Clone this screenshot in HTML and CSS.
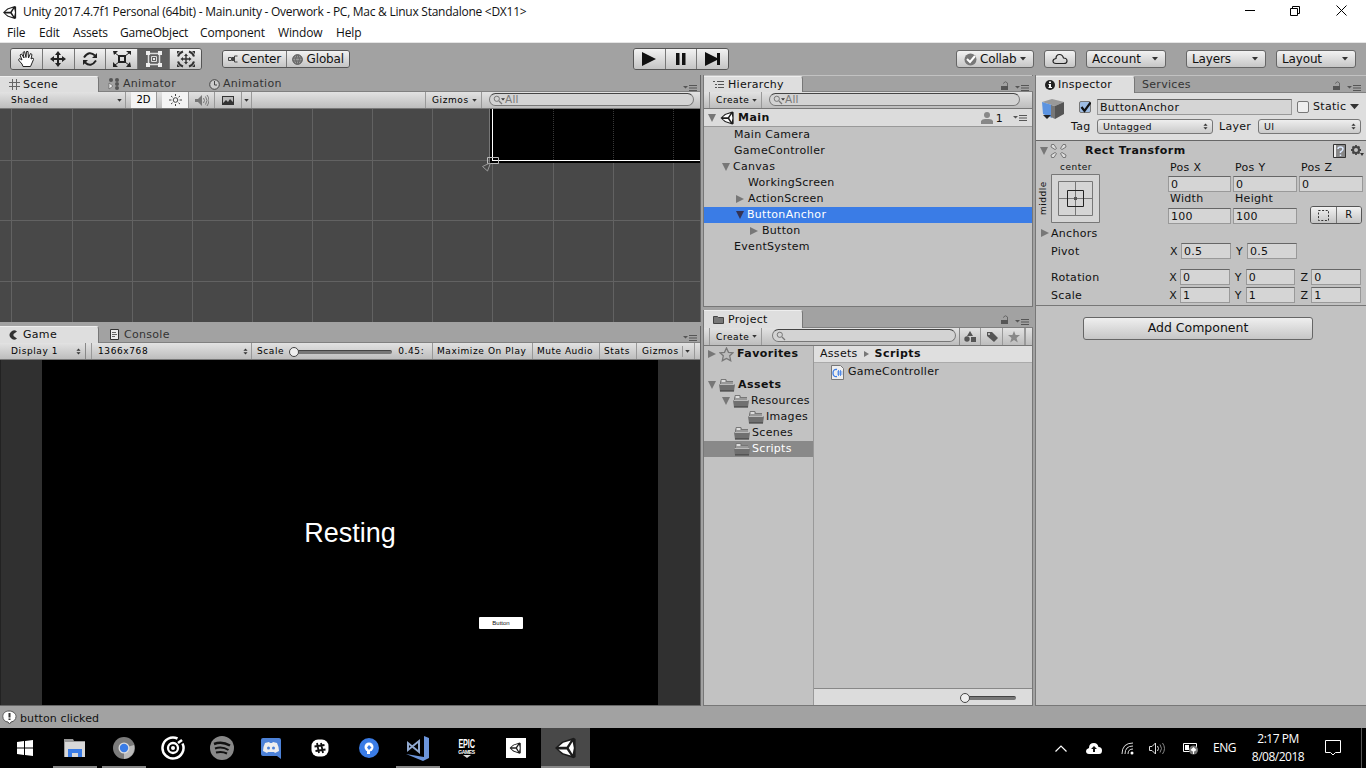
FILE: index.html
```html
<!DOCTYPE html>
<html lang="en">
<head>
<meta charset="utf-8">
<title>Unity - Main.unity</title>
<link rel="stylesheet" href="styles.css">
</head>
<body>
<svg class="defs" width="0" height="0">
  <symbol id="unity" viewBox="0 0 16 16"><path fill="#1c1c1c" d="M0 8 5 3.500 13.500.5 15 1.500 15 14.500 13.500 15.500 5 12.500Z"/><path fill="#fff" d="M2.500 7 6 4.200 11.500 2.500 8.500 7ZM2.500 9H8.500L11.500 13.500 6 11.800ZM10 8 12.800 3.500 13.700 8 12.800 12.500Z"/></symbol>
  <symbol id="lock" viewBox="0 0 10 10"><path fill="#555" d="M1 5h7v4H1z"/><path fill="none" stroke="#666" d="M3.500 2.500V2Q5.500-.5 7.500 2V5"/></symbol>
  <symbol id="menu" viewBox="0 0 14 8"><path fill="#555" d="M0 2h5L2.500 4.500zM6 1h8v1H6zM6 3.500h8v1H6zM6 6h8v1H6z"/></symbol>
  <symbol id="mag" viewBox="0 0 12 10"><circle cx="3.800" cy="3.800" r="2.600" fill="none" stroke="#777"/><path stroke="#777" stroke-width="1.300" d="M6 6l3 3"/></symbol>
  <symbol id="folder" viewBox="0 0 16 13"><path fill="#777" d="M1 3 2 0h5l1 2h6v10H1z"/><path fill="#ddd" d="M2.500 1h4v2h-4z"/><path fill="#999" d="M2 3h12v2H2z"/><path fill="#707070" d="M0 5h16l-1 7.500H1z"/><path fill="#bbb" d="M.5 5h15v1H.5z"/><path fill="#555" d="M1 11h14v1.500H1z"/></symbol>
  <symbol id="dots" viewBox="0 0 6 8"><path fill="#333" d="M.5 3 3 .5 5.500 3zM.5 5h5L3 7.500z"/></symbol>
  <symbol id="down" viewBox="0 0 6 4"><path fill="#333" d="M0 0h6L3 3.500z"/></symbol>
</svg>
<div class="app">
  <header class="titlebar">
    <svg class="logo" width="14" height="15"><use href="#unity"/></svg>
    <span class="title">Unity 2017.4.7f1 Personal (64bit) - Main.unity - Overwork - PC, Mac &amp; Linux Standalone &lt;DX11&gt;</span>
    <svg class="winctl" width="110" height="14" viewBox="0 0 110 14" fill="none" stroke="#000"><path d="M0 6.500h10M45.500 4.500h7v7h-7zM47.500 4V2.500h7v7H53M91.500 1.500l10 10M101.500 1.500l-10 10"/></svg>
  </header>
  <nav class="menubar"><span class="m1">File</span><span class="m2">Edit</span><span class="m3">Assets</span><span class="m4">GameObject</span><span class="m5">Component</span><span class="m6">Window</span><span>Help</span></nav>

  <div class="toolbar">
    <div class="group tools">
      <span class="cell"><svg width="18" height="18" viewBox="0 0 18 18" fill="#fff" stroke="#222" stroke-linejoin="round"><path d="M6 16.500 5 14 1.500 10 2.500 8.500 5 10 3 5 4.500 4 7 8 6 2.500 7.500 1.500 9 7.500 9.500 1.500 11 1.500 11.500 8 13.500 3.500 15 4.500 14 9 16 8 16.500 9.500 13.500 16.500Z"/></svg></span>
      <span class="cell"><svg width="18" height="18" viewBox="0 0 18 18" fill="#222"><path d="M9 1l3 4h-2v3h3V6l4 3-4 3v-2h-3v3h2l-3 4-3-4h2v-3H5v2L1 9l4-3v2h3V5H6z"/></svg></span>
      <span class="cell"><svg width="18" height="18" viewBox="0 0 18 18"><path fill="none" stroke="#222" stroke-width="2" d="M3 7.500Q8 0 14 5.500M15 10.500Q10 18 4 12.500"/><path fill="#222" d="M16 3v5h-5zM2 15v-5h5z"/></svg></span>
      <span class="cell"><svg width="18" height="18" viewBox="0 0 18 18"><path fill="none" stroke="#222" stroke-width="2" d="M6 6h6v6H6z"/><path stroke="#222" d="M2 3l4 3M16 3l-4 3M2 15l4-3M16 15l-4-3"/><path fill="#222" d="M0 1h5L1 5zM13 1h5v4zM0 17v-5l5 5zM18 17h-5l4-5z"/></svg></span>
      <span class="cell on"><svg width="18" height="18" viewBox="0 0 18 18" fill="none" stroke="#ddd"><path stroke-width="1.500" d="M3.500 3.500h11v11h-11z"/><path d="M6.500 6.500h5v5h-5z"/><path fill="#eee" stroke="none" d="M1 1h4v4H1zM13 1h4v4h-4zM1 13h4v4H1zM13 13h4v4h-4zM8 8h2v2H8z"/></svg></span>
      <span class="cell"><svg width="20" height="18" viewBox="0 0 20 18"><path fill="none" stroke="#333" stroke-width="2" d="M2 6.500Q3 3 7 1.500M13 1.500Q17 3 18 6.500M18 11.500Q17 15 13 16.500M7 16.500Q3 15 2 11.500"/><path fill="#333" d="M1 1h3L1 4zM19 1h-3l3 3zM1 17h3l-3-3zM19 17h-3l3-3zM10 3.500 12 6h-1.300v2.300H13V7l2.500 2L13 11V9.700h-2.300V12H12l-2 2.500L8 12h1.300V9.700H7V11L4.500 9 7 7v1.300h2.300V6H8z"/></svg></span>
    </div>
    <div class="group pivots">
      <span class="cell"><svg width="10" height="8" viewBox="0 0 10 8"><path fill="none" stroke="#444" d="M.5 2.500h3v3h-3zM9.500 1H6.500v6h3"/><path fill="#444" d="M4 2h2v4H4z"/></svg>Center</span>
      <span class="cell"><svg width="11" height="11" viewBox="0 0 11 11" fill="none" stroke="#444"><circle cx="5.500" cy="5.500" r="4.800" fill="#999"/><path stroke="#666" d="M1 4h9M1 7h9M5 1Q2 5 5 10M6 1Q9 5 6 10"/></svg>Global</span>
    </div>
    <div class="group play">
      <span class="cell"><svg width="16" height="14"><path fill="#111" d="M1 0 15 7 1 14z"/></svg></span>
      <span class="cell"><svg width="10" height="14"><path fill="#111" d="M0 1h3.500v12H0zM6 1h3.500v12H6z"/></svg></span>
      <span class="cell"><svg width="17" height="14"><path fill="#111" d="M1 0l12 6V1h3v12h-3V8L1 14z"/></svg></span>
    </div>
    <span class="btn collab"><svg width="13" height="13" viewBox="0 0 13 13"><circle cx="6.500" cy="6.500" r="6" fill="#777"/><path fill="none" stroke="#fff" stroke-width="2" d="M3 6l3 3 5-6"/></svg>Collab<svg width="6" height="4"><use href="#down"/></svg></span>
    <span class="btn cloud"><svg width="16" height="12" viewBox="0 0 16 12"><path fill="none" stroke="#222" stroke-width="1.200" d="M4 10.500Q1 10.500 1 8 1 6 4 5.500 4 1.500 7.500 1.500 10.500 1.500 11.500 5 15 5 15 8 15 10.500 12 10.500Z"/></svg></span>
    <span class="btn account">Account<svg width="6" height="4"><use href="#down"/></svg></span>
    <span class="btn layers">Layers<svg width="6" height="4"><use href="#down"/></svg></span>
    <span class="btn layout">Layout<svg width="6" height="4"><use href="#down"/></svg></span>
  </div>

  <main class="dock">
    <div class="col left">
      <section class="panel scene">
        <div class="tabs">
          <span class="tab active"><svg width="11" height="11"><path stroke="#666" d="M3.500 0v11M7.500 0v11M0 3.500h11M0 7.500h11"/></svg>Scene</span>
          <span class="tab animator"><svg width="12" height="12" viewBox="0 0 12 12" fill="#555"><circle cx="3" cy="2" r="2"/><circle cx="9" cy="2" r="2"/><circle cx="9" cy="6" r="2"/><circle cx="9" cy="10" r="2"/><path d="M2 3l7 5"/><path fill="#eee" stroke="#555" stroke-width=".6" d="M1 5v6l4-3z"/></svg>Animator</span>
          <span class="tab animation"><svg width="11" height="11" viewBox="0 0 11 11" fill="none" stroke="#444"><circle cx="5.500" cy="5.500" r="4.800" fill="#ccc"/><path d="M5.500 2v4H8"/></svg>Animation</span>
          <svg class="pmenu" width="14" height="8"><use href="#menu"/></svg>
        </div>
        <div class="strip">
          <span class="s shaded">Shaded<svg width="5" height="3"><use href="#down"/></svg></span>
          <span class="s lit twod">2D</span>
          <span class="s lit sun"><svg width="13" height="12" viewBox="0 0 13 12" fill="none" stroke="#444"><circle cx="6.500" cy="6" r="2.300"/><path d="M6.500 0v2M6.500 10v2M0 6h2.500M10.500 6H13M2 2l1.500 1.200M11 2 9.500 3.200M2 10l1.500-1.200M11 10 9.500 8.800"/></svg></span>
          <span class="s snd"><svg width="14" height="11" viewBox="0 0 14 11"><path fill="#777" d="M0 4h3l4-4v11L3 7H0z"/><path fill="none" stroke="#777" d="M8.500 3q2 2.500 0 5M10.500 1.500q3 4 0 8M12 0q4 5 0 11"/></svg></span>
          <span class="s pic"><svg width="12" height="9"><path fill="#333" d="M0 0h12v9H0z"/><path fill="#bbb" d="M1 1h10v5L8 3 6 6 4 4 1 7z"/></svg></span>
          <span class="s picd"><svg width="5" height="3"><use href="#down"/></svg></span>
          <span class="fill"></span>
          <span class="s giz">Gizmos<svg width="5" height="3"><use href="#down"/></svg></span>
          <span class="search sc"><svg width="12" height="10"><use href="#mag"/></svg><svg class="sd" width="4" height="3"><use href="#down"/></svg>All</span>
        </div>
        <svg class="sceneview" width="700" height="213" viewBox="0 109 700 213">
          <path fill="#484848" d="M0 109h700v213H0z"/>
          <path stroke="#626262" fill="none" d="M11.500 109v213M72.500 109v213M132.500 109v213M192.500 109v213M252.500 109v213M312.500 109v213M372.500 109v213M432.500 109v213M492.500 109v213M553.500 109v213M613.500 109v213M673.500 109v213M0 160.500h700M0 220.500h700M0 281.500h700"/>
          <path d="M490 109h210v54H490z"/><path stroke="#777" d="M489.500 109v53"/>
          <path stroke="#383838" stroke-dasharray="1 1" d="M553.500 109v51M613.500 109v51M673.500 109v51"/>
          <path stroke="#fff" d="M492.500 109v52M492 160.500h208"/>
          <path fill="none" stroke="#bbb" d="M487.500 157.500h11v6h-11z"/><path fill="none" stroke="#999" d="M490 163l-7.500 3.500 5 4.500 3-8"/>
        </svg>
      </section>
      <section class="panel game">
        <div class="tabs">
          <span class="tab active"><svg width="11" height="10" viewBox="0 0 11 10"><path fill="#333" d="M8 1.500A4.500 4.500 0 1 0 8 8.500L4.500 6V4z"/></svg>Game</span>
          <span class="tab console"><svg width="10" height="11" viewBox="0 0 10 11"><path fill="#eee" stroke="#333" d="M.5.5h8v10h-8z"/><path stroke="#666" d="M2 3.500h4M2 5.500h5M2 7.500h3"/></svg>Console</span>
          <svg class="pmenu" width="14" height="8"><use href="#menu"/></svg>
        </div>
        <div class="strip">
          <span class="s disp">Display 1<svg width="5" height="7"><use href="#dots"/></svg></span>
          <span class="s res">1366x768<svg width="5" height="7"><use href="#dots"/></svg></span>
          <span class="s scale">Scale<i class="slider"><b></b></i><span>0.45:</span></span>
          <span class="s max">Maximize On Play</span>
          <span class="s mute">Mute Audio</span>
          <span class="s stats">Stats</span>
          <span class="s ggiz">Gizmos<i></i><svg width="5" height="3"><use href="#down"/></svg></span>
        </div>
        <div class="gameview"><div class="screen"><p class="resting">Resting</p><span class="uibutton">Button</span></div></div>
      </section>
    </div>

    <div class="col mid">
      <section class="panel hierarchy">
        <div class="tabs">
          <span class="tab active"><svg width="12" height="9"><path stroke="#555" d="M0 1.500h2M4 1.500h7M2 4.500h2M5 4.500h6M2 7.500h2M5 7.500h6"/></svg>Hierarchy</span>
          <svg class="lock" width="10" height="10"><use href="#lock"/></svg><svg class="pmenu" width="14" height="8"><use href="#menu"/></svg>
        </div>
        <div class="strip">
          <span class="s create">Create<svg width="5" height="3"><use href="#down"/></svg></span>
          <span class="search hs"><svg width="12" height="10"><use href="#mag"/></svg><svg class="sd" width="4" height="3"><use href="#down"/></svg>All</span>
        </div>
        <div class="sceneroot"><i class="open"></i><svg width="15" height="14"><use href="#unity"/></svg><b>Main</b><svg class="person" width="12" height="12"><circle cx="6" cy="3" r="3" fill="#888"/><path fill="#888" d="M0 12V9q1-2 4-2h4q3 0 4 2v3z"/></svg><span class="one">1</span><svg width="14" height="8"><use href="#menu"/></svg></div>
        <ul class="tree">
          <li class="d1">Main Camera</li>
          <li class="d1">GameController</li>
          <li class="d1"><i class="open"></i>Canvas</li>
          <li class="d2">WorkingScreen</li>
          <li class="d2"><i class="shut"></i>ActionScreen</li>
          <li class="d2 sel"><i class="open"></i>ButtonAnchor</li>
          <li class="d3"><i class="shut"></i>Button</li>
          <li class="d1">EventSystem</li>
        </ul>
      </section>
      <section class="panel project">
        <div class="tabs">
          <span class="tab active"><svg width="12" height="10"><path fill="#777" stroke="#444" d="M.5 1.500h4l1 1h5v6H.5z"/></svg>Project</span>
          <svg class="lock" width="10" height="10"><use href="#lock"/></svg><svg class="pmenu" width="14" height="8"><use href="#menu"/></svg>
        </div>
        <div class="strip">
          <span class="s create">Create<svg width="5" height="3"><use href="#down"/></svg></span>
          <span class="search ps"><svg width="12" height="10"><use href="#mag"/></svg></span>
          <span class="s ic"><svg width="12" height="11" fill="#555"><path d="M6 0l3 5H3z"/><circle cx="3" cy="8" r="2.700"/><path d="M7 6h5v5H7z"/></svg></span>
          <span class="s ic"><svg width="12" height="12"><path fill="#555" d="M1 1h5l6 6-4 4-7-6z"/><circle cx="3" cy="3" r="1" fill="#ddd"/></svg></span>
          <span class="s ic"><svg width="12" height="12" viewBox="0 0 12 12"><path fill="#888" d="M6 0l1.600 4H12L8.500 7l1.300 4.500L6 9l-3.800 2.500L3.500 7 0 4h4.400z"/></svg></span>
          <span class="s end"></span>
        </div>
        <div class="split">
          <ul class="folders">
            <li class="f0"><i class="shut"></i><svg width="15" height="15" viewBox="0 0 15 15"><path fill="#bbb" stroke="#777" stroke-width="1.300" d="M7.500 1l2 4.300 4.500.5-3.300 3 1 4.900-4.200-2.200-4.200 2.200 1-4.900L1 5.800l4.500-.5z"/></svg><b>Favorites</b></li>
            <li class="f0 gap"><i class="open"></i><svg width="16" height="13"><use href="#folder"/></svg><b>Assets</b></li>
            <li class="f1"><i class="open"></i><svg width="16" height="13"><use href="#folder"/></svg>Resources</li>
            <li class="f2"><svg width="16" height="13"><use href="#folder"/></svg>Images</li>
            <li class="f1"><svg width="16" height="13"><use href="#folder"/></svg>Scenes</li>
            <li class="f1 picked"><svg width="16" height="13"><use href="#folder"/></svg>Scripts</li>
          </ul>
          <div class="files">
            <div class="crumbs">Assets<i class="shut"></i><b>Scripts</b></div>
            <div class="file"><svg width="13" height="15" viewBox="0 0 13 15"><path fill="#eee" stroke="#777" d="M.5.5h9l3 3v11H.5z"/><path fill="none" stroke="#3a7ce6" stroke-width="1.300" d="M6 4.500Q2 4 2 8t4 3.500"/><path stroke="#3a7ce6" stroke-width=".8" d="M7.500 5v6M9.500 5v6M6 7h5.500M6 9h5.500"/></svg>GameController</div>
            <div class="zoombar"><i class="slider"><b></b></i></div>
          </div>
        </div>
      </section>
    </div>

    <section class="panel inspector col">
      <div class="tabs">
        <span class="tab active"><svg width="10" height="10"><circle cx="5" cy="5" r="5" fill="#222"/><path fill="#fff" d="M4 1.500h2v1.500H4zM3.500 4H6v3h1v1H3.500V7H4V5h-.5z"/></svg>Inspector</span>
        <span class="tab services">Services</span>
        <svg class="lock" width="10" height="10"><use href="#lock"/></svg><svg class="pmenu" width="14" height="8"><use href="#menu"/></svg>
      </div>
      <div class="head">
        <svg width="22" height="22" viewBox="0 0 22 22"><path fill="#999" d="M0 3 10 0l12 3-9 4z"/><path fill="#5b93e0" d="M0 3l10 3v13L1 15z"/><path fill="#555" d="M13 7l9-4v12l-9 5z"/><path fill="#777" d="M9 6l4 1v13l-4-2z"/><path fill="#222" d="M1 16h8l-4 4z"/></svg>
        <div class="headrows">
          <div class="hr1"><span class="check on"><svg width="11" height="11"><path fill="none" stroke="#111" stroke-width="2.200" d="M1.500 5 4.500 9 10.500.5"/></svg></span><span class="field name">ButtonAnchor</span><span class="check"></span><span class="static">Static</span><svg width="9" height="6" viewBox="0 0 6 4"><use href="#down"/></svg></div>
          <div class="hr2"><span class="tag">Tag</span><span class="pop p1">Untagged<svg width="5" height="7"><use href="#dots"/></svg></span><span class="lay">Layer</span><span class="pop p2">UI<svg width="5" height="7"><use href="#dots"/></svg></span></div>
        </div>
      </div>
      <div class="comp">
        <div class="comphead"><i class="open"></i><svg width="17" height="16" viewBox="0 0 17 16" fill="#ddd" stroke="#777"><path d="M1.500 1.500H4L6.500 5.500 5 6.500 1 4ZM15.500 1.500H13L10.500 5.500 12 6.500 16 4ZM1.500 14.500H4L6.500 10.500 5 9.500 1 12ZM15.500 14.500H13L10.500 10.500 12 9.500 16 12Z"/></svg><b>Rect Transform</b>
          <svg class="help" width="13" height="14"><path fill="#888" stroke="#333" d="M.5.5h12v13H.5z"/><path stroke="#eee" stroke-width="2" d="M2 1v12"/><path fill="none" stroke="#dce9ff" stroke-width="1.500" d="M5 5q0-2 2.500-2t2.500 2q0 1.500-2.500 3v1M7.500 10.500v1.500"/></svg>
          <svg class="gear" width="13" height="12"><circle cx="5" cy="5" r="3" fill="none" stroke="#444" stroke-width="2"/><path stroke="#444" stroke-width="1.800" d="M5 0v2M5 8v2M0 5h2M8 5h2M1.500 1.500l1.500 1.500M7 7l1.500 1.500M8.500 1.500 7 3M3 7 1.500 8.500"/><path fill="#333" d="M9 8h4l-2 3z"/></svg></div>
        <div class="rect">
          <div class="anchorbox"><span class="ctr">center</span><span class="midl">middle</span><svg width="49" height="49" fill="none"><path fill="#d5d5d5" stroke="#777" d="M.5.5h48v48H.5z"/><path stroke="#777" d="M7.500 7.500h34v34h-34zM24.500 8v33M8 24.500h33"/><path stroke="#222" d="M16.500 16.500h16v16h-16z"/><path fill="#555" d="M23 23h3v3h-3z"/></svg></div>
          <div class="grid3">
            <span class="lbl">Pos X</span><span class="lbl">Pos Y</span><span class="lbl">Pos Z</span>
            <span class="field">0</span><span class="field">0</span><span class="field">0</span>
            <span class="lbl">Width</span><span class="lbl">Height</span><span></span>
            <span class="field">100</span><span class="field">100</span>
            <div class="group rb"><span class="cell"><svg width="11" height="11"><path fill="none" stroke="#333" stroke-dasharray="2 1.600" d="M.5.5h10v10H.5z"/></svg></span><span class="cell r">R</span></div>
          </div>
        </div>
        <div class="row anch"><i class="shut"></i>Anchors</div>
        <div class="row"><span class="rl">Pivot</span><span class="ax">X</span><span class="field">0.5</span><span class="ax">Y</span><span class="field">0.5</span></div>
        <div class="row rot"><span class="rl">Rotation</span><span class="ax">X</span><span class="field">0</span><span class="ax">Y</span><span class="field">0</span><span class="ax">Z</span><span class="field">0</span></div>
        <div class="row"><span class="rl">Scale</span><span class="ax">X</span><span class="field">1</span><span class="ax">Y</span><span class="field">1</span><span class="ax">Z</span><span class="field">1</span></div>
      </div>
      <div class="addbtn">Add Component</div>
    </section>
  </main>

  <div class="status"><svg width="15" height="15" viewBox="0 0 15 15"><path fill="#fff" stroke="#555" d="M7 1C3 1 .8 3.500.8 6.500S3 12 6 12l1.500 2L9 12c3-.5 5-2.500 5-5.500S11 1 7 1z"/><path fill="#333" d="M6.500 3h2v4.500h-2zM6.500 8.500h2v1.500h-2z"/></svg><span>button clicked</span></div>

  <footer class="taskbar">
    <span class="app-i"><svg width="16" height="16" fill="#fff"><path d="M0 2l7-1v6.500H0zM8 1l8-1v7.500H8zM0 8.500h7V15l-7-1zM8 8.500h8V16l-8-1z"/></svg></span>
    <span class="app-i run"><svg width="22" height="19"><path fill="#999" d="M0 0h9l1 2h11v16H0z"/><path fill="#d8d8d8" d="M1 3h20v15H1z"/><path fill="#3a7ce6" d="M4 10h14v8h-4v-4H8v4H4z"/></svg></span>
    <span class="app-i run"><svg width="22" height="22"><circle cx="11" cy="11" r="11" fill="#7b7b7b"/><path fill="#bbb" d="M11 11 21 8q2 12-10 14z"/><circle cx="11" cy="11" r="5.500" fill="#ddd"/><circle cx="11" cy="11" r="4.200" fill="#3a7ce6"/></svg></span>
    <span class="app-i"><svg width="24" height="24" fill="none" stroke="#fff"><path stroke-width="2.500" d="M16.500 2.500A10.500 10.500 0 1 0 21.500 7.500"/><circle cx="12" cy="12" r="5" stroke-width="2.300"/><circle cx="12" cy="12" r="2" fill="#fff" stroke="none"/><path stroke-width="2.500" d="M17 7l4-3"/></svg></span>
    <span class="app-i"><svg width="24" height="24" fill="none" stroke="#111"><circle cx="12" cy="12" r="12" fill="#888" stroke="none"/><path stroke-width="2.500" d="M4 8q8-3 16 1.500"/><path stroke-width="2" d="M5 12.500q7-2.500 13.500 1.500M6 16.500q6-1.500 11 1"/></svg></span>
    <span class="app-i"><svg width="20" height="21"><path fill="#4d82d8" d="M2 0h16q2 0 2 2v19l-4-3H2q-2 0-2-2V2q0-2 2-2z"/><path fill="#eee" d="M4 5l4-1 1 1h2l1-1 4 1q2 4 2 8l-4 2-1-1H7l-1 1-4-2q0-4 2-8z"/><circle cx="7.500" cy="10" r="1.500" fill="#4d82d8"/><circle cx="12.500" cy="10" r="1.500" fill="#4d82d8"/></svg></span>
    <span class="app-i"><svg width="18" height="18"><rect width="17" height="17" x=".5" y=".5" rx="6.500" fill="#fff"/><path stroke="#111" stroke-width="1.800" d="M6 4l2 10M10 4l2 10M3.500 7.500l10-1.500M4.500 12l10-1.500"/></svg></span>
    <span class="app-i"><svg width="20" height="20"><circle cx="10" cy="10" r="10" fill="#3a7ce6"/><circle cx="10" cy="9" r="4.500" fill="#fff"/><path fill="#fff" d="M8 10h3v6H8z"/><path fill="#3a7ce6" d="M10 7l2.500 2.500L10 12 8 9.500z"/></svg></span>
    <span class="app-i run"><svg width="24" height="25"><path fill="#6b95dc" d="M18 0l5 2v20l-6 3L0 18l18 3z"/><path fill="none" stroke="#91a9cf" stroke-width="2" d="M13 5v11L2 7v7z"/></svg></span>
    <span class="app-i epic"><b>EPIC</b><small>GAMES</small><svg width="8" height="3"><path fill="#ddd" d="M0 0h8L4 3z"/></svg></span>
    <span class="app-i"><svg width="20" height="20"><path fill="#fff" d="M0 0h20v20H0z"/><use href="#unity" x="3.500" y="4" width="12" height="12"/></svg></span>
    <span class="app-i now run"><svg width="22" height="22"><use href="#unity"/></svg></span>
    <span class="fill"></span>
    <div class="tray">
      <svg width="12" height="7"><path fill="none" stroke="#fff" stroke-width="1.200" d="M.5 6.500 6 1l5.500 5.500"/></svg>
      <svg class="t2" width="16" height="11"><path fill="#fff" d="M3 11Q0 11 0 8q0-2 3-3 0-5 5-5 3.500 0 4.500 4 3.500 0 3.500 3.500T13 11z"/><path fill="#111" d="M8 3l3 3H9v3H7V6H5z"/></svg>
      <svg class="t3" width="13" height="13" fill="none" stroke="#ddd"><path d="M1 12Q1 1 12 1M4 12Q4 4 12 4M7 12Q7 7 12 7"/><circle cx="11" cy="11" r="1.500" fill="#fff" stroke="none"/></svg>
      <svg class="t4" width="16" height="13" fill="none" stroke="#ddd"><path d="M.5 4.500H3L6.500 1v11L3 8.500H.5zM8.500 4q2 2.500 0 5"/><path stroke="#888" d="M11 2.500q3 4 0 8M13.500 1q4 5.500 0 11"/></svg>
      <svg class="t5" width="16" height="13"><path fill="none" stroke="#fff" d="M.5 1.500h13v8H.5z"/><path fill="#fff" d="M2 3h4v5H2z"/><circle cx="10.500" cy="8" r="4.500" fill="#777"/><path fill="#fff" d="M10.500 5l3 3-3 2-3-2zM10 9h1v3h-1z"/></svg>
      <span class="lang">ENG</span>
      <span class="clock"><span>2:17 PM</span><span>8/08/2018</span></span>
      <svg class="note" width="16" height="16"><path fill="none" stroke="#fff" d="M.5.5h15v12h-5L8 15l-2.500-2.500h-5z"/></svg>
      <i class="peek"></i>
    </div>
  </footer>
</div>
</body>
</html>
```
FILE: styles.css
```css
* { box-sizing: border-box; }
body { margin: 0; overflow: hidden; background: #a2a2a2; font: 11px/16px "DejaVu Sans", sans-serif; letter-spacing: .3px; color: #111; }
svg { display: block; flex: none; }
.defs { position: absolute; }
ul { list-style: none; margin: 0; padding: 0; }
b { letter-spacing: .45px; }
.app { width: 1366px; height: 768px; display: flex; flex-direction: column; white-space: nowrap; }
.fill { flex: 1; }
.titlebar { height: 24px; background: #fff; display: flex; align-items: center; padding-left: 3px; font: 12px/16px "Open Sans", sans-serif; letter-spacing: -.26px; }
.title { margin-left: 6px; }
.winctl { margin: -2px 11px 0 auto; }
.menubar { height: 19px; background: #fff; border-bottom: 1px solid #e5e5e5; display: flex; padding-left: 7px; font: 12px/18px "Open Sans", sans-serif; letter-spacing: -.15px; }
.m1 { width: 32px; } .m2 { width: 34px; } .m3 { width: 47px; } .m4 { width: 80px; } .m5 { width: 78px; } .m6 { width: 58px; }

.toolbar { height: 32px; flex: none; display: flex; align-items: center; padding-left: 10px; font-size: 12px; letter-spacing: -.15px; }
.group { display: flex; height: 22px; border: 1px solid #555; border-radius: 3px; overflow: hidden; }
.cell { display: flex; align-items: center; justify-content: center; gap: 4px; flex: 1; background: linear-gradient(#f2f2f2, #c4c4c4); border-left: 1px solid #777; }
.cell:first-child { border-left: 0; }
.cell.on { background: #606060; }
.tools { width: 192px; }
.pivots { width: 128px; height: 18px; margin-left: 20px; }
.play { width: 96px; margin-left: 283px; }
.btn { display: flex; align-items: center; height: 18px; border: 1px solid #666; border-radius: 3px; background: linear-gradient(#f2f2f2, #c6c6c6); padding: 0 7px 0 5px; }
.btn > svg:last-child { margin-left: auto; }
.collab { width: 78px; margin-left: 227px; padding-left: 7px; gap: 3px; }
.cloud { width: 32px; margin-left: 10px; padding: 0 7px; }
.account { width: 80px; margin-left: 10px; letter-spacing: .1px; }
.layers { width: 80px; margin-left: 20px; }
.layout { width: 80px; margin-left: 10px; }

.dock { height: 631px; flex: none; display: flex; gap: 2px; }
.col { display: flex; flex-direction: column; }
.left { width: 701px; }
.mid { width: 330px; }
.panel { display: flex; flex-direction: column; }
.tabs { height: 17px; flex: none; display: flex; align-items: stretch; border-bottom: 1px solid #808080; color: #333; }
.tab { display: flex; align-items: center; gap: 3px; line-height: 16px; padding-top: 1px; }
.tab.active { height: 17px; width: 99px; padding: 0 0 0 9px; background: #dedede; border-top: 1px solid #eee; border-right: 1px solid #777; border-radius: 0 3px 0 0; color: #111; }
.scene .tabs, .hierarchy .tabs { height: 16px; }
.scene .tab.active, .hierarchy .tab.active { height: 16px; }
.animator { margin-left: 9px; } .animation { margin-left: 33px; } .console { margin-left: 11px; gap: 4px; }
.pmenu { margin: 8px 3px 0 7px; }
.tabs > .pmenu:nth-last-child(1) { margin-left: auto; }
.tabs > .lock { margin: 5px 0 0 auto; }
.tabs > .lock + .pmenu:nth-last-child(1) { margin-left: 5px; }
.mid .tabs > .pmenu:nth-last-child(1) { margin-right: 4px; }
.inspector .tabs > .pmenu:nth-last-child(1) { margin-right: 5px; }
.strip { height: 17px; flex: none; display: flex; border-bottom: 1px solid #777; background: linear-gradient(#e2e2e2, #bdbdbd); font-size: 9px; letter-spacing: .6px; line-height: 16px; color: #000; }
.s { display: flex; align-items: center; border-right: 1px solid #999; }
.s > svg { margin-left: auto; }

.left .scene { height: 247px; padding-top: 1px; border-right: 1px solid #666; border-bottom: 1px solid #666; }
.shaded { width: 126px; padding: 0 3px 0 11px; }
.lit { background: #f4f4f4; justify-content: center; }
.twod { width: 26px; margin-left: 5px; font-size: 10px; letter-spacing: 0; }
.sun { width: 27px; margin-left: 5px; }
.sun > svg, .snd > svg, .pic > svg, .picd > svg, .ic > svg { margin: auto; }
.snd { width: 26px; } .pic { width: 27px; } .picd { width: 10px; }
.giz { width: 57px; border-left: 1px solid #999; padding: 0 4px 0 6px; }
.search { display: flex; align-items: center; height: 13px; margin-top: 1px; border: 1px solid #777; border-top-color: #444; border-radius: 7px; background: #d3d3d3; color: #777; padding-left: 3px; font-size: 10.500px; line-height: 11px; letter-spacing: .2px; }
.sd { margin: 0 0 0 -4px; }
.sc { width: 205px; margin-left: 7px; margin-right: 6px; }
.sceneview { width: 700px; height: 213px; }
.game { height: 380px; margin-top: 4px; border-right: 1px solid #666; border-bottom: 1px solid #666; }
.disp { width: 86px; padding: 0 4px 0 11px; border-right-color: #888; }
.res { width: 161px; margin-left: 5px; padding: 0 3px 0 6px; border-left: 1px solid #999; }
.scale { width: 181px; padding-left: 5px; }
.slider { display: block; position: relative; height: 4px; border-radius: 2px; background: #777; border-top: 1px solid #444; }
.slider b { position: absolute; left: -5px; top: -4px; width: 10px; height: 10px; border: 1px solid #444; border-radius: 50%; background: #eee; }
.scale .slider { width: 98px; margin: 2px 6px 0 10px; }
.max { width: 100px; padding-left: 4px; } .mute { width: 67px; padding-left: 4px; letter-spacing: .5px; } .stats { width: 37px; padding-left: 4px; } .ggiz { width: 58px; padding: 0 4px 0 5px; }
.ggiz i { width: 1px; height: 11px; margin-left: 3px; background: #999; }
.gameview { flex: 1; background: #303030; border-left: 1px solid #222; padding-left: 41px; }
.screen { width: 616px; height: 345px; background: #000; display: flex; flex-direction: column; }
.resting { margin: 154px 0 0; width: 616px; text-align: center; color: #fff; font: 27px/38px "Liberation Sans", sans-serif; letter-spacing: 0; }
.uibutton { width: 44px; height: 12px; margin: 65px 0 0 437px; border-radius: 1px; background: #fff; text-align: center; font: 6px/12px "Liberation Sans", sans-serif; letter-spacing: 0; }

.hierarchy { height: 232px; border: solid #777; border-width: 0 1px 1px; background: #c2c2c2; padding-top: 1px; }
.mid .tabs, .inspector .tabs { background: #a2a2a2; }
.mid .tabs { margin-right: -1px; }
.create { width: 57px; margin-left: 5px; padding: 0 4px 0 6px; border-left: 1px solid #999; }
.mid .strip .create { margin-left: 5px; width: 53px; }
.hs { width: 251px; margin-left: 7px; }
.sceneroot { height: 18px; flex: none; display: flex; align-items: center; background: #dcdcdc; border-bottom: 1px solid #999; padding: 1px 4px 0; }
.sceneroot b { margin-left: 3px; }
.sceneroot > i { margin-right: 4px; }
.person { margin-left: auto; }
.one { margin: 2px 10px 0 3px; }
.sceneroot > svg:last-child { margin-right: 1px; }
i.open, i.shut { flex: none; width: 0; height: 0; border: solid transparent; }
i.open { border-width: 8px 4.500px 0; border-top-color: #777; }
i.shut { border-width: 4.500px 0 4.500px 8px; border-left-color: #777; }
.tree li { height: 16px; display: flex; align-items: center; }
.tree i { margin-left: -12px; margin-right: 3px; }
.tree i.shut { margin-right: 4px; }
.d1 { padding-left: 30px; } .d2 { padding-left: 44px; } .d3 { padding-left: 58px; }
.sel { background: #3a7ce6; color: #fff; }
.sel i.open { border-top-color: #335; }

.project { height: 396px; margin-top: 3px; border: solid #777; border-width: 0 1px 1px; background: #c2c2c2; }
.project .strip, .project .tabs { height: 18px; }
.project .tab.active { height: 18px; }
.ps { width: 184px; margin: 1px 3px 0 10px; }
.ic { width: 22px; } .strip .ic:nth-child(3) { border-left: 1px solid #888; }
.split { display: flex; flex: 1; }
.folders { width: 110px; border-right: 1px solid #999; }
.folders li { display: flex; align-items: center; height: 16px; }
.folders svg { margin-right: 2px; }
.folders b { margin-left: 1px; }
.folders i { margin-right: 3px; }
.f0 { padding-left: 4px; } .f1 { padding-left: 30px; } .f2 { padding-left: 44px; }
.f1 i { margin-left: -12px; }
.folders .gap { margin-top: 15px; }
.picked { background: #898989; color: #fff; }
.files { flex: 1; display: flex; flex-direction: column; }
.crumbs { height: 17px; display: flex; align-items: center; background: #dfdfdf; border-bottom: 1px solid #aaa; padding-left: 6px; }
.crumbs i.shut { border-width: 3px 0 3px 5px; margin: 0 6px; }
.file { display: flex; align-items: center; gap: 4px; height: 18px; padding-left: 17px; }
.zoombar { height: 17px; margin-top: auto; background: #dcdcdc; border-top: 1px solid #888; padding: 7px 16px 0 151px; }

.inspector { width: 331px; border-left: 1px solid #777; border-bottom: 1px solid #777; background: #c2c2c2; padding-top: 1px; }
.services { margin-left: 7px; }
.head { display: flex; height: 48px; flex: none; background: #dedede; border-bottom: 1px solid #666; padding: 6px 0 0 6px; }
.headrows { margin-left: 6px; }
.hr1 { display: flex; align-items: center; height: 16px; padding-left: 9px; }
.check { width: 12px; height: 12px; border: 1px solid #777; border-radius: 2px; background: #eee; }
.check.on { background: #9dbce3; }
.field { display: block; height: 16px; border: 1px solid #999; border-top-color: #666; background: #d5d5d5; padding-left: 2px; line-height: 15px; }
.name { width: 195px; margin: 0 5px 0 6px; }
.static { margin: 0 4px; }
.hr2 { display: flex; align-items: center; margin-top: 4px; height: 15px; }
.tag { width: 27px; padding-left: 1px; }
.pop { height: 15px; display: flex; align-items: center; justify-content: space-between; border: 1px solid #777; border-radius: 3px; background: linear-gradient(#eee, #cacaca); padding: 0 4px 0 5px; font-size: 9.500px; }
.p1 { width: 116px; } .p2 { width: 103px; }
.lay { margin-left: 6px; width: 39px; }
.comp { height: 165px; border-bottom: 1px solid #777; }
.comphead { height: 20px; display: flex; align-items: center; padding: 0 2px 0 4px; }
.comphead b { margin-left: 18px; }
.comphead > svg:nth-child(2) { margin-left: 2px; }
.help { margin-left: auto; } .gear { margin-left: 5px; }
.rect { display: flex; height: 63px; margin-top: -1px; }
.anchorbox { width: 132px; flex: none; display: grid; grid-template: 14px 49px / 15px 50px; font-size: 9px; letter-spacing: .5px; }
.ctr { grid-column: 2; line-height: 14px; text-align: center; }
.midl { writing-mode: vertical-rl; transform: rotate(180deg); text-align: center; line-height: 14px; }
.grid3 { display: grid; grid-template: 16px 15px 17px 15px / 63px 64px 64px; column-gap: 2px; }
.grid3 .lbl { padding-left: 2px; line-height: 15px; }
.rb { width: 52px; height: 18px; margin: -2px 0 0 11px; }
.rb .r { font-size: 10px; }
.row { display: flex; height: 16px; margin-top: 2px; padding-left: 15px; line-height: 17px; }
.row.anch { height: 16px; margin-top: 2px; padding-left: 5px; align-items: center; gap: 2px; }
.rl { width: 119px; }
.row .ax { width: 11px; } .row .field { width: 50px; margin-right: 5px; }
.row.rot { margin-top: 10px; }
.addbtn { width: 230px; height: 23px; margin: 11px 0 0 47px; border: 1px solid #666; border-radius: 3px; background: linear-gradient(#efefef, #c6c6c6); font-size: 12.500px; line-height: 20px; text-align: center; letter-spacing: 0; }

.status { height: 22px; flex: none; display: flex; align-items: center; gap: 3px; padding-left: 2px; letter-spacing: .1px; }
.status span { padding-top: 4px; }
.taskbar { height: 40px; flex: none; display: flex; background: #000; color: #fff; }
.app-i { width: 49px; display: flex; flex-direction: column; align-items: center; justify-content: center; padding-top: 2px; border-bottom: 2px solid transparent; }
.app-i:not(.now):not(:first-child) { padding-left: 2px; }
.app-i.run { border-image: linear-gradient(90deg, transparent 12%, #888 12% 94%, transparent 94%) 2; }
.app-i.now { background: #484848; margin-left: 2px; border-bottom: 2px solid #888; border-image: none; }
.epic { font-family: "Liberation Sans", sans-serif; line-height: 9px; }
.epic b { font-size: 13px; line-height: 11px; letter-spacing: -.3px; transform: scaleX(.56); }
.epic small { font-size: 5px; line-height: 6px; font-weight: bold; letter-spacing: -.4px; }
.tray { display: flex; align-items: center; font: 12px/18px "Open Sans", sans-serif; letter-spacing: -.5px; }
.t2 { margin-left: 19px; } .t3 { margin-left: 19px; } .t4 { margin-left: 15px; } .t5 { margin-left: 18px; }
.lang { margin-left: 14px; width: 24px; }
.clock { width: 54px; margin-left: 14px; display: flex; flex-direction: column; align-items: center; }
.note { margin-left: 20px; }
.peek { width: 1px; height: 40px; margin: 0 4px 0 20px; background: #555; }
```
